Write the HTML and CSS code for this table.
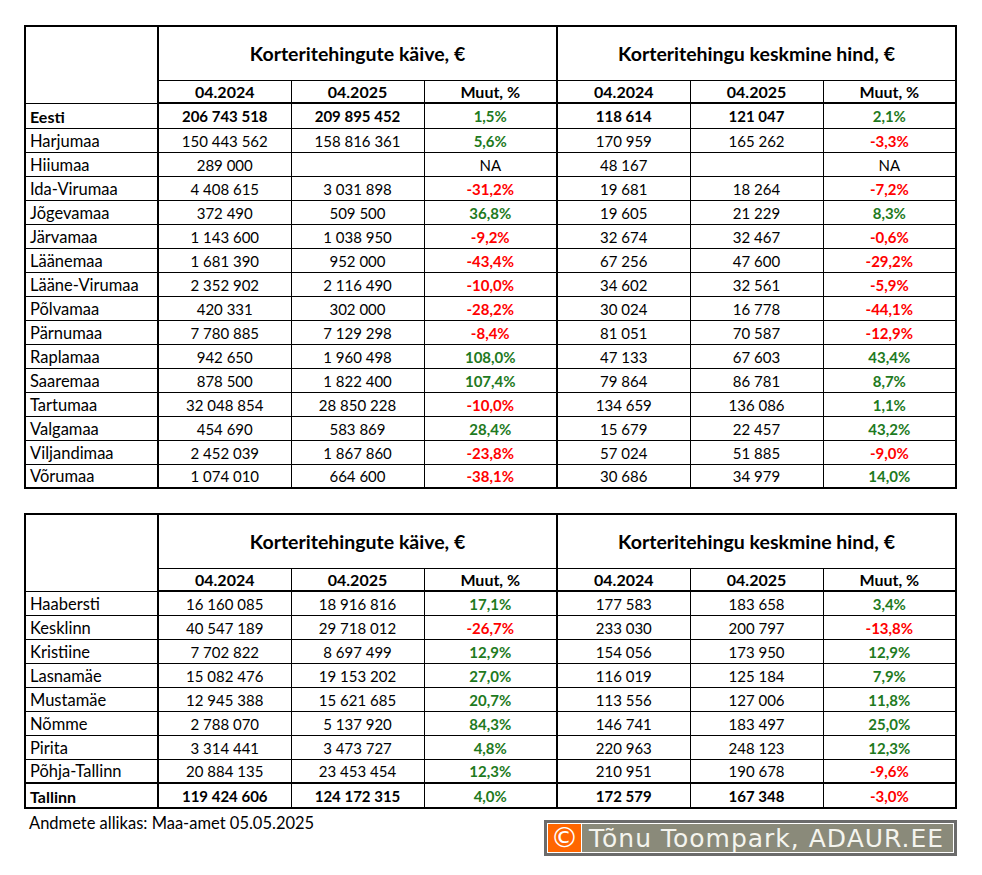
FILE: index.html
```html
<!DOCTYPE html>
<html lang="et">
<head>
<meta charset="utf-8">
<title>Korteritehingud</title>
<link rel="stylesheet" href="styles.css">
</head>
<body>
<div class="page">
  <table class="grid">
    <colgroup><col><col><col><col><col><col><col></colgroup>
    <thead>
      <tr class="h1">
        <th rowspan="2" class="corner"></th>
        <th colspan="3" class="grp">Korteritehingute käive, €</th>
        <th colspan="3" class="grp">Korteritehingu keskmine hind, €</th>
      </tr>
      <tr class="h2">
        <th class="sep">04.2024</th><th>04.2025</th><th>Muut, %</th>
        <th class="sep">04.2024</th><th>04.2025</th><th>Muut, %</th>
      </tr>
    </thead>
    <tbody>
      <tr class="total first"><td class="lbl">Eesti</td><td class="sep">206 743 518</td><td>209 895 452</td><td class="pos">1,5%</td><td class="sep">118 614</td><td>121 047</td><td class="pos">2,1%</td></tr>
      <tr><td class="lbl">Harjumaa</td><td class="sep">150 443 562</td><td>158 816 361</td><td class="pos">5,6%</td><td class="sep">170 959</td><td>165 262</td><td class="neg">-3,3%</td></tr>
      <tr><td class="lbl">Hiiumaa</td><td class="sep">289 000</td><td></td><td class="na">NA</td><td class="sep">48 167</td><td></td><td class="na">NA</td></tr>
      <tr><td class="lbl">Ida-Virumaa</td><td class="sep">4 408 615</td><td>3 031 898</td><td class="neg">-31,2%</td><td class="sep">19 681</td><td>18 264</td><td class="neg">-7,2%</td></tr>
      <tr><td class="lbl">Jõgevamaa</td><td class="sep">372 490</td><td>509 500</td><td class="pos">36,8%</td><td class="sep">19 605</td><td>21 229</td><td class="pos">8,3%</td></tr>
      <tr><td class="lbl">Järvamaa</td><td class="sep">1 143 600</td><td>1 038 950</td><td class="neg">-9,2%</td><td class="sep">32 674</td><td>32 467</td><td class="neg">-0,6%</td></tr>
      <tr><td class="lbl">Läänemaa</td><td class="sep">1 681 390</td><td>952 000</td><td class="neg">-43,4%</td><td class="sep">67 256</td><td>47 600</td><td class="neg">-29,2%</td></tr>
      <tr><td class="lbl">Lääne-Virumaa</td><td class="sep">2 352 902</td><td>2 116 490</td><td class="neg">-10,0%</td><td class="sep">34 602</td><td>32 561</td><td class="neg">-5,9%</td></tr>
      <tr><td class="lbl">Põlvamaa</td><td class="sep">420 331</td><td>302 000</td><td class="neg">-28,2%</td><td class="sep">30 024</td><td>16 778</td><td class="neg">-44,1%</td></tr>
      <tr><td class="lbl">Pärnumaa</td><td class="sep">7 780 885</td><td>7 129 298</td><td class="neg">-8,4%</td><td class="sep">81 051</td><td>70 587</td><td class="neg">-12,9%</td></tr>
      <tr><td class="lbl">Raplamaa</td><td class="sep">942 650</td><td>1 960 498</td><td class="pos">108,0%</td><td class="sep">47 133</td><td>67 603</td><td class="pos">43,4%</td></tr>
      <tr><td class="lbl">Saaremaa</td><td class="sep">878 500</td><td>1 822 400</td><td class="pos">107,4%</td><td class="sep">79 864</td><td>86 781</td><td class="pos">8,7%</td></tr>
      <tr><td class="lbl">Tartumaa</td><td class="sep">32 048 854</td><td>28 850 228</td><td class="neg">-10,0%</td><td class="sep">134 659</td><td>136 086</td><td class="pos">1,1%</td></tr>
      <tr><td class="lbl">Valgamaa</td><td class="sep">454 690</td><td>583 869</td><td class="pos">28,4%</td><td class="sep">15 679</td><td>22 457</td><td class="pos">43,2%</td></tr>
      <tr><td class="lbl">Viljandimaa</td><td class="sep">2 452 039</td><td>1 867 860</td><td class="neg">-23,8%</td><td class="sep">57 024</td><td>51 885</td><td class="neg">-9,0%</td></tr>
      <tr><td class="lbl">Võrumaa</td><td class="sep">1 074 010</td><td>664 600</td><td class="neg">-38,1%</td><td class="sep">30 686</td><td>34 979</td><td class="pos">14,0%</td></tr>
    </tbody>
  </table>

  <table class="grid second">
    <colgroup><col><col><col><col><col><col><col></colgroup>
    <thead>
      <tr class="h1">
        <th rowspan="2" class="corner"></th>
        <th colspan="3" class="grp">Korteritehingute käive, €</th>
        <th colspan="3" class="grp">Korteritehingu keskmine hind, €</th>
      </tr>
      <tr class="h2">
        <th class="sep">04.2024</th><th>04.2025</th><th>Muut, %</th>
        <th class="sep">04.2024</th><th>04.2025</th><th>Muut, %</th>
      </tr>
    </thead>
    <tbody>
      <tr class="first"><td class="lbl">Haabersti</td><td class="sep">16 160 085</td><td>18 916 816</td><td class="pos">17,1%</td><td class="sep">177 583</td><td>183 658</td><td class="pos">3,4%</td></tr>
      <tr><td class="lbl">Kesklinn</td><td class="sep">40 547 189</td><td>29 718 012</td><td class="neg">-26,7%</td><td class="sep">233 030</td><td>200 797</td><td class="neg">-13,8%</td></tr>
      <tr><td class="lbl">Kristiine</td><td class="sep">7 702 822</td><td>8 697 499</td><td class="pos">12,9%</td><td class="sep">154 056</td><td>173 950</td><td class="pos">12,9%</td></tr>
      <tr><td class="lbl">Lasnamäe</td><td class="sep">15 082 476</td><td>19 153 202</td><td class="pos">27,0%</td><td class="sep">116 019</td><td>125 184</td><td class="pos">7,9%</td></tr>
      <tr><td class="lbl">Mustamäe</td><td class="sep">12 945 388</td><td>15 621 685</td><td class="pos">20,7%</td><td class="sep">113 556</td><td>127 006</td><td class="pos">11,8%</td></tr>
      <tr><td class="lbl">Nõmme</td><td class="sep">2 788 070</td><td>5 137 920</td><td class="pos">84,3%</td><td class="sep">146 741</td><td>183 497</td><td class="pos">25,0%</td></tr>
      <tr><td class="lbl">Pirita</td><td class="sep">3 314 441</td><td>3 473 727</td><td class="pos">4,8%</td><td class="sep">220 963</td><td>248 123</td><td class="pos">12,3%</td></tr>
      <tr><td class="lbl">Põhja-Tallinn</td><td class="sep">20 884 135</td><td>23 453 454</td><td class="pos">12,3%</td><td class="sep">210 951</td><td>190 678</td><td class="neg">-9,6%</td></tr>
      <tr class="total last"><td class="lbl">Tallinn</td><td class="sep">119 424 606</td><td>124 172 315</td><td class="pos">4,0%</td><td class="sep">172 579</td><td>167 348</td><td class="neg">-3,0%</td></tr>
    </tbody>
  </table>

  <div class="footer">
    <div class="source">Andmete allikas: Maa-amet 05.05.2025</div>
    <div class="badge">
      <span class="copy">©</span>
      <span class="name">Tõnu Toompark, ADAUR.EE</span>
    </div>
  </div>
</div>
</body>
</html>
```

FILE: styles.css
```css
html, body {
  margin: 0;
  padding: 0;
  background: #ffffff;
}

.page {
  padding: 25px 0 0 24px;
  font-family: Lato, "Open Sans", "Liberation Sans", sans-serif;
  font-size: 15px;
  color: #000;
}

.grid {
  border-collapse: collapse;
  table-layout: fixed;
  width: 933px;
  border: 2px solid #000;
}

.grid col {
  width: 133px;
}

.grid th,
.grid td {
  border: 1px solid #000;
  padding: 1px 0 0 0;
  text-align: center;
  white-space: nowrap;
  overflow: hidden;
}

.grid .sep {
  border-left: 2px solid #000;
}

.grid .corner {
  border-right: 2px solid #000;
}

.grid .grp {
  font-size: 19.5px;
  font-weight: 700;
  border-left: 2px solid #000;
}

.grid tr.h1 {
  height: 54px;
}

.grid tr.h2 {
  height: 23px;
}

.grid tr.h2 th {
  font-size: 16px;
  font-weight: 700;
  border-bottom: 2px solid #000;
}

.grid tbody tr {
  height: 24px;
}

.grid td.lbl {
  text-align: left;
  padding-left: 4px;
  font-size: 16.5px;
  border-right: 2px solid #000;
}

.grid tr.total td {
  font-weight: 700;
}

.grid tr.total td.lbl {
  font-size: 16px;
}

.grid tr.total {
  height: 25px;
}

.grid tr.last td {
  border-top: 2px solid #000;
}

.grid td.pos {
  color: #1e7a1e;
  font-weight: 700;
}

.grid td.neg {
  color: #ff0000;
  font-weight: 700;
}

.second {
  margin-top: 24px;
}

.footer {
  display: flex;
  justify-content: space-between;
  align-items: flex-start;
  width: 933px;
}

.source {
  padding: 4px 0 0 5px;
  font-size: 16.5px;
}

.badge {
  box-sizing: border-box;
  width: 413px;
  margin-top: 11px;
  display: flex;
  align-items: stretch;
  border: 3px solid #6b6b6b;
  background: #fff;
  padding: 1px;
  gap: 1px;
  height: 36px;
}

.copy {
  background: #ff6600;
  color: #fff;
  width: 33px;
  display: flex;
  align-items: center;
  justify-content: center;
  font-family: "DejaVu Sans", sans-serif;
  font-size: 28px;
  line-height: 1;
}

.name {
  flex: 1;
  background: #8a8a7a;
  color: #f4f4ee;
  font-family: "DejaVu Sans", sans-serif;
  font-size: 25px;
  letter-spacing: 1px;
  padding: 0 0 0 7px;
  display: flex;
  align-items: center;
  white-space: nowrap;
  overflow: hidden;
}
```
